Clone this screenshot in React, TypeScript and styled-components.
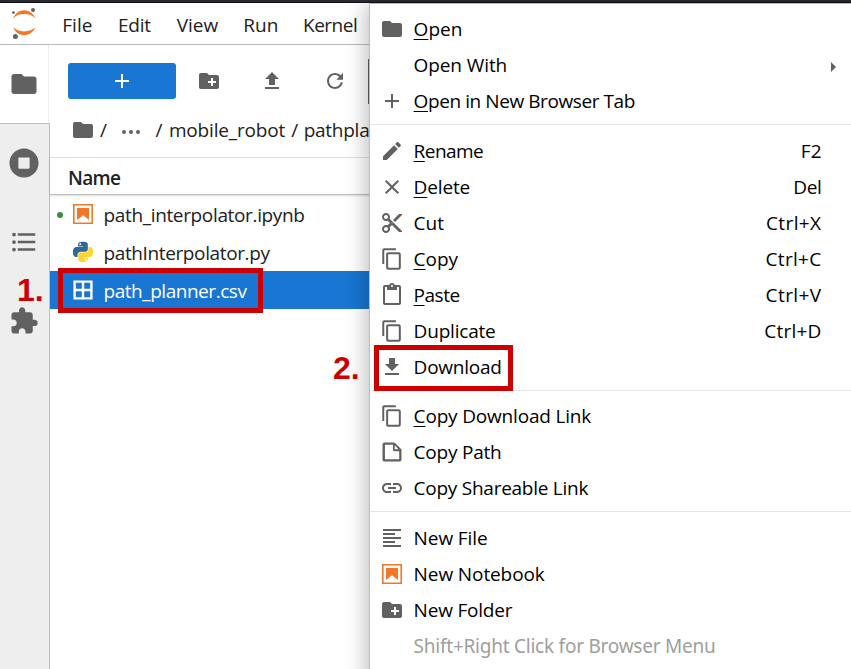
import React from 'react';
import styled, { createGlobalStyle } from 'styled-components';

const GlobalStyle = createGlobalStyle`
  * { box-sizing: border-box; }
  body { margin: 0; background: #fff; overflow: hidden; }
`;

/* ---------- icons ---------- */

const ICONS = {
  folder: {
    box: '0 0 24 24',
    d: 'M10 4H4c-1.1 0-1.99.9-1.99 2L2 18c0 1.1.9 2 2 2h16c1.1 0 2-.9 2-2V8c0-1.1-.9-2-2-2h-8l-2-2z',
  },
  newFolder: {
    box: '0 0 24 24',
    d: 'M20 6h-8l-2-2H4c-1.11 0-1.99.89-1.99 2L2 18c0 1.11.89 2 2 2h16c1.11 0 2-.89 2-2V8c0-1.11-.89-2-2-2zm-1 8h-3v3h-2v-3h-3v-2h3V9h2v3h3v2z',
  },
  upload: { box: '0 0 24 24', d: 'M9 16h6v-6h4l-7-7-7 7h4v6zm-4 2h14v2H5v-2z' },
  download: { box: '0 0 24 24', d: 'M19 9h-4V3H9v6H5l7 7 7-7zM5 18v2h14v-2H5z' },
  refresh: {
    box: '0 0 18 18',
    d: 'M9 13.5c-2.49 0-4.5-2.01-4.5-4.5S6.51 4.5 9 4.5c1.24 0 2.36.52 3.17 1.33L10 8h5V3l-1.76 1.76C12.15 3.68 10.66 3 9 3 5.69 3 3.01 5.69 3.01 9S5.69 15 9 15c2.97 0 5.43-2.16 5.9-5h-1.52c-.46 2-2.24 3.5-4.38 3.5z',
  },
  add: { box: '0 0 24 24', d: 'M19 13h-6v6h-2v-6H5v-2h6V5h2v6h6v2z' },
  edit: {
    box: '0 0 24 24',
    d: 'M3 17.25V21h3.75L17.81 9.94l-3.75-3.75L3 17.25zM20.71 7.04c.39-.39.39-1.02 0-1.41l-2.34-2.34c-.39-.39-1.02-.39-1.41 0l-1.83 1.83 3.75 3.75 1.83-1.83z',
  },
  close: {
    box: '0 0 24 24',
    d: 'M19 6.41L17.59 5 12 10.59 6.41 5 5 6.41 10.59 12 5 17.59 6.41 19 12 13.41 17.59 19 19 17.59 13.41 12z',
  },
  cut: {
    box: '0 0 24 24',
    d: 'M9.64 7.64c.23-.5.36-1.05.36-1.64 0-2.21-1.79-4-4-4S2 3.79 2 6s1.79 4 4 4c.59 0 1.14-.13 1.64-.36L10 12l-2.36 2.36C7.14 14.13 6.59 14 6 14c-2.21 0-4 1.79-4 4s1.79 4 4 4 4-1.79 4-4c0-.59-.13-1.14-.36-1.64L12 14l7 7h3v-1L9.64 7.64zM6 8c-1.1 0-2-.89-2-2s.9-2 2-2 2 .89 2 2-.9 2-2 2zm0 12c-1.1 0-2-.89-2-2s.9-2 2-2 2 .89 2 2-.9 2-2 2zm6-7.5c-.28 0-.5-.22-.5-.5s.22-.5.5-.5.5.22.5.5-.22.5-.5.5zM19 3l-6 6 2 2 7-7V3z',
  },
  copy: {
    box: '0 0 18 18',
    d: 'M11.9 1H3.2C2.4 1 1.7 1.7 1.7 2.5v10.2h1.5V2.5h8.7V1zM14.1 3.9h-8c-.8 0-1.5.7-1.5 1.5v10.2c0 .8.7 1.5 1.5 1.5h8c.8 0 1.5-.7 1.5-1.5V5.4c-.1-.8-.7-1.5-1.5-1.5zM14.1 15.5h-8V5.4h8v10.1z',
  },
  paste: {
    box: '0 0 24 24',
    d: 'M19 2h-4.18C14.4.84 13.3 0 12 0c-1.3 0-2.4.84-2.82 2H5c-1.1 0-2 .9-2 2v16c0 1.1.9 2 2 2h14c1.1 0 2-.9 2-2V4c0-1.1-.9-2-2-2zm-7 0c.55 0 1 .45 1 1s-.45 1-1 1-1-.45-1-1 .45-1 1-1zm7 18H5V4h2v3h10V4h2v16z',
  },
  file: {
    box: '0 0 22 22',
    d: 'M19.3 8.2l-5.5-5.5c-.3-.3-.7-.5-1.2-.5H3.9c-.8.1-1.6.9-1.6 1.8v14.1c0 .9.7 1.6 1.6 1.6h14.2c.9 0 1.6-.7 1.6-1.6V9.4c.1-.5-.1-.9-.4-1.2zm-5.8-3.3l3.4 3.6h-3.4V4.9zm3.9 12.7H4.7c-.1 0-.2 0-.2-.2V4.7c0-.2.1-.3.2-.3h7.2v4.4s0 .8.3 1.1c.3.3 1.1.3 1.1.3h4.3v7.2s-.1.2-.2.2z',
  },
  link: {
    box: '0 0 24 24',
    d: 'M3.9 12c0-1.71 1.39-3.1 3.1-3.1h4V7H7c-2.76 0-5 2.24-5 5s2.24 5 5 5h4v-1.9H7c-1.71 0-3.1-1.39-3.1-3.1zM8 13h8v-2H8v2zm9-6h-4v1.9h4c1.71 0 3.1 1.39 3.1 3.1s-1.39 3.1-3.1 3.1h-4V17h4c2.76 0 5-2.24 5-5s-2.24-5-5-5z',
  },
  text: { box: '0 0 24 24', d: 'M15 15H3v2h12v-2zm0-8H3v2h12V7zM3 13h18v-2H3v2zm0 8h18v-2H3v2zM3 3v2h18V3H3z' },
  notebook: {
    box: '0 0 22 22',
    d: 'M18.7 3.3v15.4H3.3V3.3h15.4m1.5-1.5H1.8v18.3h18.3l.1-18.3zM16.5 16.5l-5.4-4.3-5.6 4.3v-11h11z',
  },
  spreadsheet: {
    box: '0 0 22 22',
    d: 'M2.2 2.2v17.6h17.6V2.2H2.2zm15.4 7.7h-5.5V4.4h5.5v5.5zM9.9 4.4v5.5H4.4V4.4h5.5zm-5.5 7.7h5.5v5.5H4.4v-5.5zm7.7 5.5v-5.5h5.5v5.5h-5.5z',
  },
  extension: {
    box: '0 0 24 24',
    d: 'M20.5 11H19V7c0-1.1-.9-2-2-2h-4V3.5C13 2.12 11.88 1 10.5 1S8 2.12 8 3.5V5H4c-1.1 0-1.99.9-1.99 2v3.8H3.5c1.49 0 2.7 1.21 2.7 2.7s-1.21 2.7-2.7 2.7H2V20c0 1.1.9 2 2 2h3.8v-1.5c0-1.49 1.21-2.7 2.7-2.7 1.49 0 2.7 1.21 2.7 2.7V22H17c1.1 0 2-.9 2-2v-4h1.5c1.38 0 2.5-1.12 2.5-2.5S21.88 11 20.5 11z',
  },
  toc: {
    box: '0 0 24 24',
    d: 'M7 5h14v2H7V5m0 8v-2h14v2H7M4 4.5a1.5 1.5 0 0 1 0 3a1.5 1.5 0 0 1 0-3m0 6a1.5 1.5 0 0 1 0 3a1.5 1.5 0 0 1 0-3M7 19v-2h14v2H7m-3-2.5a1.5 1.5 0 0 1 0 3a1.5 1.5 0 0 1 0-3z',
  },
  running: {
    box: '0 0 512 512',
    d: 'M256 8C119 8 8 119 8 256s111 248 248 248 248-111 248-248S393 8 256 8zm96 328c0 8.800-7.200 16-16 16H176c-8.800 0-16-7.200-16-16V176c0-8.800 7.200-16 16-16h160c8.800 0 16 7.200 16 16v160z',
  },
  ellipses: {
    box: '0 0 24 24',
    d: 'M5 10.100a2 2 0 1 0 0 4a2 2 0 1 0 0-4zm7 0a2 2 0 1 0 0 4a2 2 0 1 0 0-4zm7 0a2 2 0 1 0 0 4a2 2 0 1 0 0-4z',
  },
};
type IconName = keyof typeof ICONS;

const Svg = styled.svg<{ $size: number }>`
  display: block;
  flex: none;
  width: ${p => p.$size}px;
  height: ${p => p.$size}px;
`;

function Icon({ name, size = 24, color = '#616161' }: { name: IconName; size?: number; color?: string }) {
  return (
    <Svg $size={size} viewBox={ICONS[name].box} fill={color} aria-hidden>
      <path d={ICONS[name].d} />
    </Svg>
  );
}

function PythonIcon() {
  return (
    <Svg $size={24} viewBox="-10 -10 131.16 132.39" aria-hidden>
      <path
        fill="#306998"
        d="M54.919 0C50.335.022 45.958.413 42.106 1.095 30.760 3.099 28.700 7.295 28.700 15.032v10.219h26.813v3.406H18.638c-7.793 0-14.616 4.684-16.750 13.594-2.462 10.213-2.571 16.586 0 27.250 1.906 7.938 6.457 13.594 14.250 13.594h9.219v-12.250c0-8.850 7.657-16.656 16.750-16.656h26.781c7.455 0 13.406-6.138 13.406-13.625V15.032c0-7.266-6.130-12.725-13.406-13.938C64.282.328 59.502-.020 54.919 0zm-14.500 8.220c2.769 0 5.031 2.298 5.031 5.125 0 2.816-2.262 5.093-5.031 5.093-2.780 0-5.031-2.277-5.031-5.093 0-2.827 2.251-5.125 5.031-5.125z"
      />
      <path
        fill="#ffd43b"
        d="M85.638 28.657v11.906c0 9.231-7.826 17-16.750 17H42.106c-7.336 0-13.406 6.279-13.406 13.625v25.531c0 7.267 6.318 11.541 13.406 13.625 8.487 2.496 16.626 2.947 26.781 0 6.750-1.954 13.406-5.887 13.406-13.625V86.501H55.513v-3.406h40.187c7.793 0 10.697-5.436 13.407-13.594 2.799-8.399 2.680-16.476 0-27.250-1.926-7.758-5.604-13.594-13.407-13.594zM70.575 93.313c2.780 0 5.031 2.278 5.031 5.094 0 2.827-2.251 5.125-5.031 5.125-2.769 0-5.031-2.298-5.031-5.125 0-2.816 2.262-5.094 5.031-5.094z"
      />
    </Svg>
  );
}

const LogoSvg = styled.svg`
  display: block;
  flex: none;
  width: 48px;
  height: 41px;
`;

function JupyterLogo() {
  return (
    <LogoSvg viewBox="0 3 48 41" aria-hidden>
      <path fill="#f37726" d="M13 18.500C15 13.500 19.200 10.300 24.200 10.300S33.500 13.500 35.500 18.500C32.800 15.600 28.800 14.100 24.200 14.100S15.700 15.600 13 18.500z" />
      <path fill="#f37726" d="M13 27C15 32 19.200 35.200 24.200 35.200S33.500 32 35.500 27C32.800 29.900 28.800 31.400 24.200 31.400S15.700 29.900 13 27z" />
      <circle fill="#616161" cx="33" cy="10" r="2" />
      <circle fill="#616161" cx="15.400" cy="36.600" r="2.500" />
      <circle fill="#616161" cx="13.400" cy="12.600" r="1.400" />
    </LogoSvg>
  );
}

/* ---------- shell ---------- */

const Window = styled.div`
  position: relative;
  display: flex;
  flex-direction: column;
  width: 851px;
  height: 669px;
  overflow: hidden;
  background: #fff;
  color: #212121;
  font: 19px/36px 'Open Sans', 'Noto Sans', sans-serif;
`;

const TopEdge = styled.div`
  flex: none;
  height: 3px;
  background: #2b2a33;
  border-bottom: 1px solid #0e0e13;
`;

const MenuBar = styled.header`
  display: flex;
  flex: none;
  height: 42px;
  border-bottom: 1px solid #b8b8b8;
`;

const MenuBarItems = styled.nav`
  display: flex;
  padding: 4px 0 0 14.300px;
  gap: 24.700px;
`;

const Label = styled.span<{ $spacing?: number }>`
  white-space: pre;
  letter-spacing: ${p => p.$spacing ?? 0}px;
`;

const BarLabel = styled(Label)<{ $width: number }>`
  width: ${p => p.$width}px;
`;

const Body = styled.div`
  display: flex;
  flex: 1;
  min-height: 0;
`;

const SideBar = styled.aside`
  display: flex;
  flex: none;
  flex-direction: column;
  width: 50px;
  background: #eee;
`;

const SideTab = styled.div`
  display: flex;
  align-items: center;
  height: 79px;
  padding-left: 9px;
`;

const ActiveTabRow = styled.div`
  flex: none;
  height: 78px;
  background: #fff;
`;

const ActiveTab = styled(SideTab)`
  width: 49px;
  height: 78px;
  border-right: 1px solid #ececec;
`;

const InactiveTabs = styled.div`
  flex: 1;
  border-top: 1px solid #bdbdbd;
  border-right: 1px solid #bdbdbd;

  > :first-child {
    height: 78px;
  }
`;

const FileBrowser = styled.main`
  display: flex;
  flex: 1;
  flex-direction: column;
  min-width: 0;
`;

const Toolbar = styled.div`
  display: flex;
  align-items: center;
  height: 72px;
  padding-left: 18px;
`;

const NewButton = styled.button`
  display: flex;
  align-items: center;
  justify-content: center;
  width: 108px;
  height: 36px;
  padding: 0;
  border: 0;
  border-radius: 3px;
  background: #1976d2;
`;

const ToolButton = styled.button`
  display: flex;
  align-items: center;
  justify-content: center;
  width: 63px;
  height: 36px;
  padding: 0;
  border: 0;
  background: transparent;
`;

const ToolGroup = styled.div`
  display: flex;
  padding-left: 1.500px;
`;

const FilterEdge = styled.div`
  flex: none;
  width: 1px;
  height: 45px;
  margin: 1px 0 0 1.500px;
  background: #616161;
`;

const Crumbs = styled.div`
  display: flex;
  align-items: center;
  height: 40px;
  padding: 0 0 14px 21px;
`;

const Crumb = styled(Label)<{ $left: number }>`
  margin-left: ${p => p.$left}px;
`;

const CrumbDots = styled.div`
  margin: 4px 0 0 12px;
`;

const ListHeader = styled.div`
  height: 38px;
  padding: 2px 0 0 18px;
  border-top: 1px solid #e0e0e0;
  border-bottom: 1px solid #bdbdbd;
  box-shadow: 0 1px 2px rgba(0, 0, 0, 0.14);
  font-weight: 600;
  letter-spacing: -0.7px;
`;

const FileList = styled.div`
  display: flex;
  flex-direction: column;
`;

const FileRow = styled.div<{ $selected?: boolean }>`
  display: flex;
  align-items: center;
  height: 38px;
  padding: 1px 0 0 7px;
  background: ${p => (p.$selected ? '#1976d2' : 'transparent')};
  color: ${p => (p.$selected ? '#fff' : '#212121')};
`;

const KernelDot = styled.span<{ $on?: boolean }>`
  flex: none;
  width: 6px;
  height: 6px;
  margin-right: 8px;
  border-radius: 50%;
  background: ${p => (p.$on ? '#388e3c' : 'transparent')};
`;

const FileIcon = styled.span`
  flex: none;
  margin-top: -1px;
`;

const FileName = styled(Label)`
  margin-left: 8.500px;
`;

/* ---------- context menu ---------- */

const ContextMenu = styled.div`
  position: absolute;
  top: 3px;
  left: 369px;
  width: 490px;
  height: 700px;
  padding-top: 7px;
  border: 1px solid #bdbdbd;
  background: #fff;
  box-shadow: 0 1px 22px 1px rgba(0, 0, 0, 0.3);
  color: #000;
`;

const MenuRow = styled.div<{ $muted?: boolean }>`
  display: flex;
  align-items: center;
  height: 36px;
  padding: 0 30px 0 10px;
  color: ${p => (p.$muted ? '#9e9e9e' : 'inherit')};
  font-family: ${p => (p.$muted ? "'Noto Sans', sans-serif" : 'inherit')};
`;

const IconSlot = styled.span`
  flex: none;
  width: 33.600px;
`;

const Mnemonic = styled.span`
  text-decoration: underline;
  text-decoration-thickness: 1px;
  text-underline-offset: 3px;
`;

const Shortcut = styled(Label)`
  margin: 0 6.500px 0 auto;
`;

const Separator = styled.div`
  height: 1px;
  margin: 5.250px 0 7.250px;
  background: #e6e6e6;
`;

const SubmenuArrow = styled.span`
  margin: 3px -8px 0 auto;
  border-left: 5.500px solid #616161;
  border-top: 5px solid transparent;
  border-bottom: 5px solid transparent;
`;

interface Item {
  label: string;
  spacing?: number;
  icon?: IconName;
  color?: string;
  mnemonic?: boolean;
  keys?: string;
  keySpacing?: number;
  submenu?: boolean;
  muted?: boolean;
}

const GROUPS: Item[][] = [
  [
    { label: 'Open', icon: 'folder', mnemonic: true },
    { label: 'Open With', submenu: true, spacing: -0.1 },
    { label: 'Open in New Browser Tab', icon: 'add', mnemonic: true, spacing: -0.42 },
  ],
  [
    { label: 'Rename', icon: 'edit', mnemonic: true, keys: 'F2', spacing: -0.55 },
    { label: 'Delete', icon: 'close', mnemonic: true, keys: 'Del', spacing: -0.15, keySpacing: -0.3 },
    { label: 'Cut', icon: 'cut', keys: 'Ctrl+X', keySpacing: 0.4 },
    { label: 'Copy', icon: 'copy', mnemonic: true, keys: 'Ctrl+C', keySpacing: 0.3 },
    { label: 'Paste', icon: 'paste', mnemonic: true, keys: 'Ctrl+V', keySpacing: 0.4, spacing: -0.5 },
    { label: 'Duplicate', icon: 'copy', keys: 'Ctrl+D', keySpacing: 0.2, spacing: -0.2 },
    { label: 'Download', icon: 'download', spacing: -0.25 },
  ],
  [
    { label: 'Copy Download Link', icon: 'copy', mnemonic: true, spacing: -0.18 },
    { label: 'Copy Path', icon: 'file', spacing: -0.22 },
    { label: 'Copy Shareable Link', icon: 'link', spacing: -0.26 },
  ],
  [
    { label: 'New File', icon: 'text', spacing: -0.1 },
    { label: 'New Notebook', icon: 'notebook', color: '#f37726', spacing: -0.1 },
    { label: 'New Folder', icon: 'newFolder', spacing: -0.2 },
    { label: 'Shift+Right Click for Browser Menu', muted: true, spacing: -0.24 },
  ],
];

function MenuItem({ item }: { item: Item }) {
  return (
    <MenuRow $muted={item.muted}>
      <IconSlot>{item.icon && <Icon name={item.icon} color={item.color} />}</IconSlot>
      <Label $spacing={item.spacing}>
        {item.mnemonic ? <Mnemonic>{item.label[0]}</Mnemonic> : item.label[0]}
        {item.label.slice(1)}
      </Label>
      {item.keys && <Shortcut $spacing={item.keySpacing}>{item.keys}</Shortcut>}
      {item.submenu && <SubmenuArrow />}
    </MenuRow>
  );
}

/* ---------- annotations ---------- */

const Highlight = styled.div<{ $x: number; $y: number; $w: number; $h: number }>`
  position: absolute;
  left: ${p => p.$x}px;
  top: ${p => p.$y}px;
  width: ${p => p.$w}px;
  height: ${p => p.$h}px;
  border: 5px solid #c00;
`;

const StepNumber = styled.span<{ $x: number; $y: number }>`
  position: absolute;
  left: ${p => p.$x}px;
  top: ${p => p.$y}px;
  color: #c00;
  font: bold 32px/36px 'Liberation Sans', Arial, sans-serif;
`;

export default function App() {
  return (
    <Window>
      <GlobalStyle />
      <TopEdge />
      <MenuBar>
        <JupyterLogo />
        <MenuBarItems>
          <BarLabel $width={31}>File</BarLabel>
          <BarLabel $width={34} $spacing={-0.2}>Edit</BarLabel>
          <BarLabel $width={42}>View</BarLabel>
          <BarLabel $width={35}>Run</BarLabel>
          <BarLabel $width={56} $spacing={-0.5}>Kernel</BarLabel>
        </MenuBarItems>
      </MenuBar>
      <Body>
        <SideBar>
          <ActiveTabRow>
            <ActiveTab><Icon name="folder" size={30} /></ActiveTab>
          </ActiveTabRow>
          <InactiveTabs>
            <SideTab><Icon name="running" size={30} /></SideTab>
            <SideTab><Icon name="toc" size={30} /></SideTab>
            <SideTab><Icon name="extension" size={30} /></SideTab>
          </InactiveTabs>
        </SideBar>
        <FileBrowser>
          <Toolbar>
            <NewButton><Icon name="add" color="#fff" /></NewButton>
            <ToolGroup>
              <ToolButton><Icon name="newFolder" /></ToolButton>
              <ToolButton><Icon name="upload" /></ToolButton>
              <ToolButton><Icon name="refresh" /></ToolButton>
            </ToolGroup>
            <FilterEdge />
          </Toolbar>
          <Crumbs>
            <Icon name="folder" />
            <Crumb $left={5}>/</Crumb>
            <CrumbDots><Icon name="ellipses" /></CrumbDots>
            <Crumb $left={12.5}>/</Crumb>
            <Crumb $left={6.5} $spacing={-0.17}>mobile_robot</Crumb>
            <Crumb $left={6}>/</Crumb>
            <Crumb $left={5.5} $spacing={-0.25}>pathplanner</Crumb>
          </Crumbs>
          <ListHeader>Name</ListHeader>
          <FileList>
            <FileRow>
              <KernelDot $on />
              <FileIcon><Icon name="notebook" color="#f37726" /></FileIcon>
              <FileName $spacing={-0.35}>path_interpolator.ipynb</FileName>
            </FileRow>
            <FileRow>
              <KernelDot />
              <FileIcon><PythonIcon /></FileIcon>
              <FileName $spacing={-0.38}>pathInterpolator.py</FileName>
            </FileRow>
            <FileRow $selected>
              <KernelDot />
              <FileIcon><Icon name="spreadsheet" color="#fff" /></FileIcon>
              <FileName $spacing={-0.46}>path_planner.csv</FileName>
            </FileRow>
          </FileList>
        </FileBrowser>
      </Body>
      <ContextMenu>
        {GROUPS.map((group, i) => (
          <React.Fragment key={i}>
            {i > 0 && <Separator />}
            {group.map(item => <MenuItem key={item.label} item={item} />)}
          </React.Fragment>
        ))}
      </ContextMenu>
      <Highlight $x={58} $y={268} $w={205} $h={45} />
      <Highlight $x={374} $y={345} $w={139} $h={46} />
      <StepNumber $x={17} $y={272}>1.</StepNumber>
      <StepNumber $x={333} $y={350}>2.</StepNumber>
    </Window>
  );
}
